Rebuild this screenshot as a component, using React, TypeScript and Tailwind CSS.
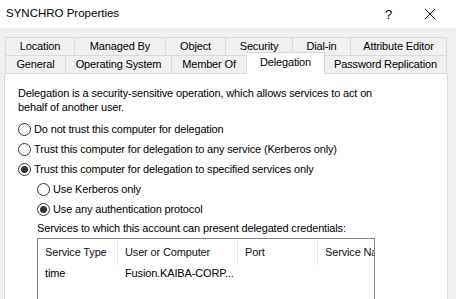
import React from 'react'

const row1 = [
  { label: 'Location', w: 'w-[70px]' },
  { label: 'Managed By', w: 'w-[91px]' },
  { label: 'Object', w: 'w-[60px]' },
  { label: 'Security', w: 'w-[67px]' },
  { label: 'Dial-in', w: 'w-[58px]' },
  { label: 'Attribute Editor', w: 'w-[96px]' },
]

const row2 = [
  { label: 'General', w: 'w-[61px]' },
  { label: 'Operating System', w: 'w-[106px]' },
  { label: 'Member Of', w: 'w-[75px]' },
  { label: 'Delegation', w: 'w-[78px]', active: true },
  { label: 'Password Replication', w: 'w-[122px]' },
]

const Radio = ({ checked, label }: { checked?: boolean; label: string }) => (
  <div className="flex items-center h-[20px]">
    <span className="w-[13px] h-[13px] rounded-full border border-[#333] bg-white flex items-center justify-center shrink-0">
      {checked && <span className="w-[7px] h-[7px] rounded-full bg-[#333]" />}
    </span>
    <span className="ml-[3px]">{label}</span>
  </div>
)

const App = () => {
  return (
    <div
      className="w-[456px] h-[299px] bg-[#f0f0f0] overflow-hidden flex flex-col text-[11px] tracking-[-0.15px] text-black leading-none"
      style={{ fontFamily: '"Liberation Sans", Arial, sans-serif' }}
    >
      {/* title bar */}
      <div className="h-[28px] bg-white flex items-center pl-[6px] shrink-0">
        <span className="text-[11.5px] tracking-normal">SYNCHRO Properties</span>
        <span className="ml-auto text-[13px] mr-[32px]">?</span>
        <svg width="12" height="12" viewBox="0 0 12 12" className="mr-[20px]">
          <path d="M1 1 L11 11 M11 1 L1 11" stroke="#111" strokeWidth="1" />
        </svg>
      </div>

      {/* tabs */}
      <div className="pt-[9px] pl-[5px] shrink-0">
        <div className="flex h-[18px]">
          {row1.map((t, i) => (
            <div
              key={t.label}
              className={`${t.w} h-full border-t border-r border-[#d9d9d9] ${i === 0 ? 'border-l' : ''} flex items-center justify-center`}
            >
              {t.label}
            </div>
          ))}
        </div>
        <div className="flex h-[18px]">
          {row2.map((t, i) =>
            t.active ? (
              <div
                key={t.label}
                className={`${t.w} h-[22px] -mt-[3px] bg-white border-t border-r border-[#d9d9d9] relative z-10 flex items-start justify-center pt-[4px]`}
              >
                {t.label}
              </div>
            ) : (
              <div
                key={t.label}
                className={`${t.w} h-full border-t border-r border-[#d9d9d9] ${i === 0 ? 'border-l' : ''} flex items-center justify-center`}
              >
                {t.label}
              </div>
            )
          )}
        </div>
      </div>

      {/* panel */}
      <div className="ml-[4px] w-[444px] flex-1 bg-white border border-[#d9d9d9] pl-[13px] pt-[12px]">
        <p className="leading-[14px]">
          Delegation is a security-sensitive operation, which allows services to act on
          <br />
          behalf of another user.
        </p>
        <div className="mt-[5px]">
          <Radio label="Do not trust this computer for delegation" />
          <Radio label="Trust this computer for delegation to any service (Kerberos only)" />
          <Radio checked label="Trust this computer for delegation to specified services only" />
        </div>
        <div className="pl-[19px]">
          <Radio label="Use Kerberos only" />
          <Radio checked label="Use any authentication protocol" />
          <div className="mt-[2px] h-[14px] flex items-center">Services to which this account can present delegated credentials:</div>
          <div className="mt-[3px] w-[338px] h-[80px] border border-[#828790] overflow-hidden">
            <div className="flex h-[26px] items-center text-[#111]">
              <div className="w-[80px] shrink-0 h-full pl-[7px] flex items-center border-r border-[#e5e5e5]">Service Type</div>
              <div className="w-[120px] shrink-0 h-full pl-[7px] flex items-center border-r border-[#e5e5e5]">User or Computer</div>
              <div className="w-[80px] shrink-0 h-full pl-[7px] flex items-center border-r border-[#e5e5e5]">Port</div>
              <div className="w-[57px] shrink-0 h-full pl-[7px] flex items-center whitespace-nowrap overflow-hidden">Service Name</div>
            </div>
            <div className="flex h-[16px] items-center whitespace-nowrap">
              <div className="w-[80px] shrink-0 pl-[7px]">time</div>
              <div className="w-[120px] shrink-0 pl-[7px]">Fusion.KAIBA-CORP...</div>
            </div>
          </div>
        </div>
      </div>
    </div>
  )
}

export default App
